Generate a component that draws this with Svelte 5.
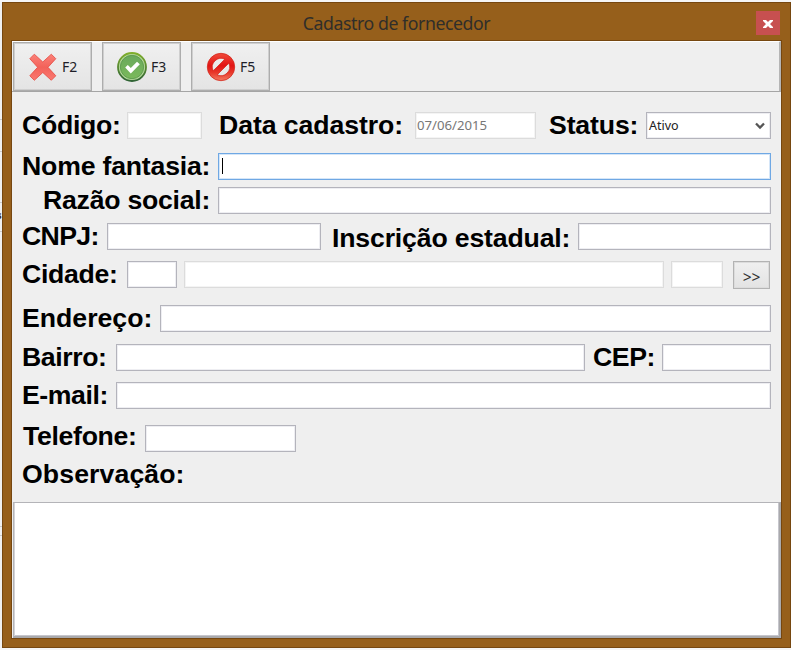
<script>
  let observacao = $state('');
</script>

<div class="desktop">
  <div class="strip">
    <i class="s1"></i><i class="s2"></i><i class="s3"></i><b>s</b><i class="s4"></i><i class="s5"></i><i class="s6"></i>
  </div>
  <section class="window">
    <header>
      <h1>Cadastro de fornecedor</h1>
      <button class="close" aria-label="Fechar">
        <svg width="10" height="8" viewBox="0 0 10 8"><path d="M0 0h3l2 2 2-2h3v1L7 4l3 3v1H7L5 6 3 8H0V7l3-3-3-3z" fill="#fff" /></svg>
      </button>
    </header>
    <div class="client">
      <nav>
        <button class="tool">
          <svg width="30" height="30" viewBox="0 0 30 30">
            <defs><linearGradient id="gx" x1="0" y1="0" x2="0" y2="1"><stop offset="0" stop-color="#fb8179" /><stop offset=".5" stop-color="#f3625a" /><stop offset="1" stop-color="#fa7970" /></linearGradient></defs>
            <path d="M6.300 2.200 14.800 10 23.300 2.200 27.800 6.700 20 15.300 27.800 23.800 23.300 28.300 14.800 20.500 6.300 28.300 1.800 23.800 9.600 15.300 1.800 6.700z" fill="url(#gx)" stroke="#e4483f" stroke-width=".8" stroke-linejoin="round" />
          </svg><span>F2</span>
        </button>
        <button class="tool">
          <svg width="30" height="30" viewBox="0 0 30 30">
            <defs>
              <linearGradient id="gr" x1="0" y1="0" x2="0" y2="1"><stop offset="0" stop-color="#7fae2c" /><stop offset="1" stop-color="#2f6335" /></linearGradient>
              <linearGradient id="gc" x1="0" y1="0" x2="0" y2="1"><stop offset="0" stop-color="#69a95c" /><stop offset="1" stop-color="#7ab95b" /></linearGradient>
            </defs>
            <circle cx="15" cy="15" r="14" fill="#b5d99a" stroke="url(#gr)" stroke-width="1.800" />
            <circle cx="15" cy="15" r="11.700" fill="url(#gc)" stroke="#559449" stroke-width=".8" />
            <path d="m8.200 15.600 2.600-2.500 3 2.900 6.200-6.300 2.800 2.600-9 9.200z" fill="#fff" />
          </svg><span>F3</span>
        </button>
        <button class="tool">
          <svg width="30" height="30" viewBox="0 0 30 30">
            <defs><linearGradient id="gn" x1="0" y1="0" x2="0" y2="1"><stop offset="0" stop-color="#f04a3a" /><stop offset=".45" stop-color="#e31515" /><stop offset=".7" stop-color="#e8372a" /><stop offset="1" stop-color="#f37a62" /></linearGradient></defs>
            <path fill-rule="evenodd" d="M15 1.300a13.700 13.700 0 1 0 0 27.400 13.700 13.700 0 1 0 0-27.400zM7.200 18.800A8.700 8.700 0 0 1 18.800 7.200zM22.800 11.200A8.700 8.700 0 0 1 11.200 22.800z" fill="url(#gn)" stroke="#d32a20" stroke-width=".8" />
          </svg><span>F5</span>
        </button>
      </nav>

      <form onsubmit={(e) => e.preventDefault()}>
        <div class="row r1">
          <label class="l-cod" for="cod">Código:</label><input id="cod" class="f-cod" disabled />
          <label class="l-data" for="data">Data cadastro:</label><input id="data" class="f-data" value="07/06/2015" disabled />
          <label class="l-status" for="status">Status:</label>
          <div id="status" class="select"><span>Ativo</span>
            <svg width="10" height="8" viewBox="0 0 10 8"><path d="m1 1.500 4 4 4-4" fill="none" stroke="#555" stroke-width="2.300" /></svg>
          </div>
        </div>
        <div class="row r2"><label class="l-nome" for="nome">Nome fantasia:</label><div id="nome" class="field focus grow"><i></i></div></div>
        <div class="row r3"><label class="l-razao" for="razao">Razão social:</label><input id="razao" class="grow" /></div>
        <div class="row r4">
          <label class="l-cnpj" for="cnpj">CNPJ:</label><input id="cnpj" class="f-cnpj" />
          <label class="l-insc" for="insc">Inscrição estadual:</label><input id="insc" class="grow" />
        </div>
        <div class="row r5">
          <label class="l-cid" for="cid">Cidade:</label><input id="cid" class="f-cid" />
          <input class="f-cidnome" aria-label="Nome da cidade" disabled /><input class="f-uf" aria-label="UF" disabled />
          <button class="more">&gt;&gt;</button>
        </div>
        <div class="row r6"><label class="l-end" for="end">Endereço:</label><input id="end" class="grow" /></div>
        <div class="row r7">
          <label class="l-bairro" for="bairro">Bairro:</label><input id="bairro" class="f-bairro" />
          <label class="l-cep" for="cep">CEP:</label><input id="cep" class="grow" />
        </div>
        <div class="row r8"><label class="l-bairro" for="email">E-mail:</label><input id="email" class="grow" /></div>
        <div class="row r9"><label class="l-tel" for="tel">Telefone:</label><input id="tel" class="f-tel" /></div>
        <div class="row r10"><label class="l-obs" for="obs">Observação:</label></div>
      </form>
      <textarea id="obs" bind:value={observacao}></textarea>
    </div>
  </section>
</div>

<style>
  :global(body) { margin: 0; }
  * { box-sizing: border-box; }
  .desktop { width: 791px; height: 650px; display: flex; background: #f5f5f5; padding-top: 2px; overflow: hidden; }
  .strip { width: 2px; height: 646px; background: #f0f0f0; overflow: hidden; font: bold 11px/12px "Noto Sans", sans-serif; }
  .strip i { display: block; height: 1px; background: #c9c9c9; }
  .strip b { display: block; margin-left: -4px; color: #44322d; height: 12px; }
  .s1 { margin-top: 117px; }
  .s2 { margin-top: 31px; }
  .s3 { margin-top: 50px; }
  .strip b { margin-top: 6px; }
  .s4 { margin-top: 10px; }
  .s5 { margin-top: 294px; }
  .s6 { margin-top: 8px; }
  .window { width: 789px; height: 646px; background: #965f1b; border: 1px solid #764710; display: flex; flex-direction: column; padding: 0 9px 9px; }
  header { height: 38px; display: flex; position: relative; justify-content: center; flex: none; }
  h1 { margin: 0; padding-top: 7px; font: 400 17.7px/26px "Noto Sans", sans-serif; letter-spacing: -.43px; color: #302e2a; white-space: nowrap; }
  .close { position: absolute; right: 1px; top: 8px; width: 24px; height: 24px; padding: 1px 0 0; border: 0; background: #c75050; display: grid; place-items: center; }
  .client { flex: 1; min-height: 0; background: #efefef; outline: 1px solid #764710; display: flex; flex-direction: column; }
  nav { height: 51px; flex: none; display: flex; gap: 10px; padding: 0 0 0 1px; border-top: 1px solid #fff; border-bottom: 1px solid #a5a5a5; border-right: 2px solid #b5b5b5; }
  .tool { width: 79px; height: 49px; border: 1px solid #adadad; box-shadow: inset 0 0 0 1px #cfcfcf; background: linear-gradient(#f0f0f0, #e4e4e4); padding: 0 0 0 14px; display: flex; align-items: center; font: 14px/18px "Noto Sans", sans-serif; color: #1e1e28; }
  .tool span { margin-left: 4px; }
  form { flex: none; height: 410px; padding-left: 9px; width: 759px; }
  .row { display: flex; height: 27px; align-items: flex-start; }
  label { font: bold 26.670px/26px "Liberation Sans", Arial, sans-serif; color: #000; white-space: nowrap; flex: none; padding-left: 1px; }
  input, .field, .select { height: 27px; border: 1px solid #b4b4bc; box-shadow: inset 0 0 0 1px #eeeef2; background: #fff; padding: 0 2px; margin: 0; flex: none; border-radius: 0; font: 13.200px/24px "Noto Sans", sans-serif; }
  input:disabled { border-color: #dcdcdc; box-shadow: inset 0 0 0 1px #f4f4f4; color: #777; background: #fff; }
  .row .grow { flex: 1; min-width: 0; width: 0; }
  .row .focus { border-color: #6fa8e4; box-shadow: inset 0 0 0 1px #d5e6f8; }
  .focus i { display: block; width: 1px; height: 16px; margin: 4px 0 0 1px; background: #000; }
  .select { width: 125px; display: flex; justify-content: space-between; align-items: center; padding-right: 5px; color: #222; font-size: 12.500px; }
  .r1 { margin-top: 20px; }
  .r2 { margin-top: 14px; }
  .r3 { margin-top: 7px; }
  .r4 { margin-top: 9px; }
  .r5 { margin-top: 11px; }
  .r6 { margin-top: 17px; }
  .r7 { margin-top: 12px; }
  .r8 { margin-top: 11px; }
  .r9 { margin-top: 16px; }
  .r9 label { margin-top: -2px; }
  .r10 { margin-top: 9px; }
  .l-cod, .l-cid { width: 106px; letter-spacing: -.3px; }
  .f-cod { width: 75px; }
  .l-data { width: 213px; padding-left: 17px; letter-spacing: -.08px; }
  .row .f-data { width: 121px; padding: 0 1px 2px; }
  .l-status { width: 110px; padding-left: 13px; letter-spacing: -.15px; }
  .l-nome { width: 197px; letter-spacing: -.2px; }
  .l-razao { width: 197px; padding-left: 22px; letter-spacing: -.25px; }
  .l-cnpj { width: 86px; letter-spacing: -.65px; }
  .f-cnpj { width: 214px; }
  .l-insc { width: 257px; padding-left: 11px; margin-top: 2px; letter-spacing: -.17px; }
  .f-cid { width: 50px; }
  .r5 .f-cidnome { width: 480px; margin-left: 7px; }
  .r5 .f-uf { width: 52px; margin-left: 7px; }
  .more { width: 37px; height: 28px; margin-left: 10px; padding: 3px 0 0; border: 1px solid #b3b3b3; box-shadow: inset 0 0 0 1px #dcdcdc; background: linear-gradient(#f0f0f0, #e3e3e3); font: 15.500px/18px "Noto Sans", sans-serif; color: #333; }
  .l-end { width: 139px; }
  .l-bairro { width: 95px; letter-spacing: -.42px; }
  .f-bairro { width: 469px; }
  .l-cep { width: 77px; padding-left: 8px; letter-spacing: -.45px; }
  .l-tel { width: 124px; padding-left: 2px; letter-spacing: -.32px; }
  .l-obs { letter-spacing: .1px; }
  .f-tel { width: 151px; }
  textarea { flex: 1; min-height: 0; resize: none; border: 1px solid #b4b4b8; border-right: 2px solid #a9a9ac; border-bottom: 2px solid #a9a9ac; box-shadow: inset 1px 0 0 #d4d4d8, inset -1px -1px 0 #c6c6cc; background: #fff; margin: 0 0 0 1px; border-radius: 0; outline: 0; }
</style>
